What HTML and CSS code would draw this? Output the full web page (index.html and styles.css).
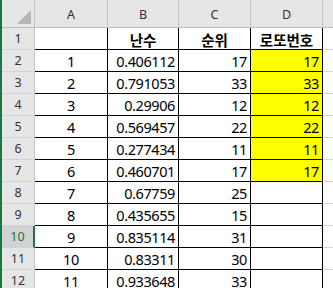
FILE: index.html
```html
<!DOCTYPE html>
<html lang="ko">

<head>
    <meta charset="UTF-8">
    <meta name="viewport" content="width=device-width, initial-scale=1.0">
    <title>로또번호</title>
    <link rel="stylesheet" href="styles.css">
</head>

<body>
    <div class="sheet">
        <!-- 열 머리글 -->
        <div class="corner"><div class="corner-mark"></div></div>
        <div class="col-head">A</div>
        <div class="col-head">B</div>
        <div class="col-head">C</div>
        <div class="col-head">D</div>
        <div class="col-head col-rest"></div>

        <div class="row-head">1</div>
        <div class="cell"></div>
        <div class="cell title">난수</div>
        <div class="cell title">순위</div>
        <div class="cell title">로또번호</div>
        <div class="grid"></div>

        <div class="row-head">2</div>
        <div class="cell center">1</div>
        <div class="cell num">0.406112</div>
        <div class="cell num">17</div>
        <div class="cell num mark">17</div>
        <div class="grid"></div>

        <div class="row-head">3</div>
        <div class="cell center">2</div>
        <div class="cell num">0.791053</div>
        <div class="cell num">33</div>
        <div class="cell num mark">33</div>
        <div class="grid"></div>

        <div class="row-head">4</div>
        <div class="cell center">3</div>
        <div class="cell num">0.29906</div>
        <div class="cell num">12</div>
        <div class="cell num mark">12</div>
        <div class="grid"></div>

        <div class="row-head">5</div>
        <div class="cell center">4</div>
        <div class="cell num">0.569457</div>
        <div class="cell num">22</div>
        <div class="cell num mark">22</div>
        <div class="grid"></div>

        <div class="row-head">6</div>
        <div class="cell center">5</div>
        <div class="cell num">0.277434</div>
        <div class="cell num">11</div>
        <div class="cell num mark">11</div>
        <div class="grid"></div>

        <div class="row-head">7</div>
        <div class="cell center">6</div>
        <div class="cell num">0.460701</div>
        <div class="cell num">17</div>
        <div class="cell num mark">17</div>
        <div class="grid"></div>

        <div class="row-head">8</div>
        <div class="cell center">7</div>
        <div class="cell num">0.67759</div>
        <div class="cell num">25</div>
        <div class="cell num"></div>
        <div class="grid"></div>

        <div class="row-head">9</div>
        <div class="cell center">8</div>
        <div class="cell num">0.435655</div>
        <div class="cell num">15</div>
        <div class="cell num"></div>
        <div class="grid"></div>

        <div class="row-head selected">10</div>
        <div class="cell center">9</div>
        <div class="cell num">0.835114</div>
        <div class="cell num">31</div>
        <div class="cell num"></div>
        <div class="grid"></div>

        <div class="row-head">11</div>
        <div class="cell center">10</div>
        <div class="cell num">0.83311</div>
        <div class="cell num">30</div>
        <div class="cell num"></div>
        <div class="grid"></div>

        <div class="row-head">12</div>
        <div class="cell center">11</div>
        <div class="cell num">0.933648</div>
        <div class="cell num">33</div>
        <div class="cell num"></div>
        <div class="grid"></div>
    </div>
</body>

</html>
```

FILE: styles.css
```css
* {
    margin: 0;
    padding: 0;
    box-sizing: border-box;
}

body {
    background: #fff;
    overflow: hidden;
    font-family: 'Noto Sans', 'Noto Sans CJK KR', sans-serif;
    color: #000;
}

.sheet {
    display: grid;
    grid-template-columns: 33px 73px 71px 72px 72px 1fr;
    grid-template-rows: 28px;
    grid-auto-rows: 22px;
    border-left: 2px solid #217346;
    height: 100vh;
}

.corner {
    background: #e6e6e6;
    border-right: 1px solid #c4c4c4;
    border-bottom: 1px solid #bdbdbd;
    display: flex;
    justify-content: flex-end;
    align-items: flex-end;
    padding: 0 3px 3px 0;
}

.corner-mark {
    width: 0;
    height: 0;
    border-left: 14px solid transparent;
    border-bottom: 14px solid #b5b5b5;
}

.col-head {
    background: #e6e6e6;
    border-right: 1px solid #c4c4c4;
    border-bottom: 1px solid #bdbdbd;
    display: flex;
    justify-content: center;
    align-items: center;
    font-size: 12.5px;
    color: #333;
    padding-top: 1px;
}

.col-rest {
    border-right: none;
}

.row-head {
    background: #e6e6e6;
    border-right: 1px solid #c4c4c4;
    border-bottom: 1px solid #d4d4d4;
    display: flex;
    justify-content: center;
    align-items: center;
    font-size: 12.5px;
    color: #333;
}

.row-head.selected {
    background: #d2d2d2;
    border-right: 2px solid #217346;
    color: #217346;
}

.cell {
    border-right: 1px solid #000;
    border-bottom: 1px solid #000;
    display: flex;
    align-items: center;
    font-size: 14.5px;
    letter-spacing: -0.4px;
    padding: 1px 3px 0;
    white-space: nowrap;
}

.title {
    justify-content: center;
    font-family: 'Noto Sans CJK KR', sans-serif;
    font-weight: bold;
    font-size: 14.5px;
    letter-spacing: 0;
}

.center {
    justify-content: center;
}

.num {
    justify-content: flex-end;
}

.mark {
    background: #ffff00;
}

.grid {
    border-bottom: 1px solid #d4d4d4;
}
```
